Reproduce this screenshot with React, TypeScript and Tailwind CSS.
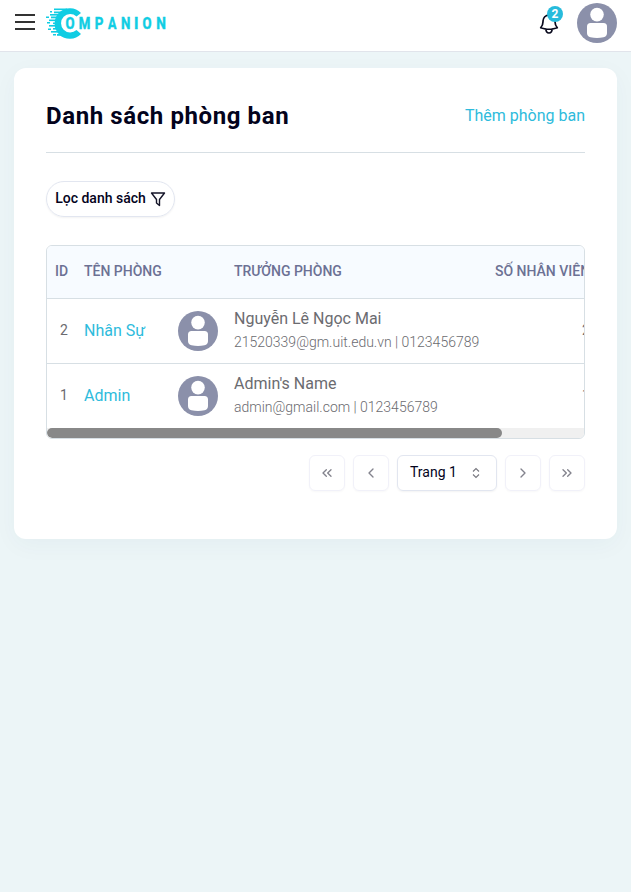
import React from "react";
import { ChevronLeft, ChevronRight, ChevronsLeft, ChevronsRight } from "lucide-react";

function Avatar() {
  return (
    <svg className="block size-10 shrink-0" viewBox="0 0 40 40">
      <circle cx="20" cy="20" r="20" fill="#8b90aa" />
      <circle cx="20" cy="11.600" r="6.800" fill="#fff" />
      <path d="M10 23.500Q10 20 13.500 20H26.500Q30 20 30 23.500V30Q30 33.600 26.500 34.300Q20 35.600 13.500 34.300Q10 33.600 10 30Z" fill="#fff" />
    </svg>
  );
}

// Each wordmark letter with its left edge and width.
const logoLetters: [string, number, number][] = [
  ["O", 20.5, 9],
  ["M", 33.8, 11.6],
  ["P", 49.8, 8.6],
  ["A", 63, 8.4],
  ["N", 76, 9.4],
  ["I", 89, 4.4],
  ["O", 97.5, 9],
  ["N", 111.2, 9.6],
];

function Logo() {
  return (
    <svg className="block h-[34px] w-[124px]" viewBox="0 0 124 34" fill="#10cde3">
      <path d="M36 7A15.300 15.300 0 1 0 36 28L31.500 24A9.200 9.200 0 1 1 31.500 10.500Z" />
      <rect x="9" y="2.500" width="13" height="1.600" />
      <rect x="5" y="5" width="2" height="1.500" />
      <rect x="9" y="5.500" width="9" height="1.800" />
      <rect x="5" y="8" width="10" height="1.600" />
      <rect x="1" y="10.500" width="3" height="1.500" />
      <rect x="6" y="10.500" width="9" height="1.800" />
      <rect x="4" y="13.500" width="9" height="1.600" />
      <rect x="8" y="16.500" width="6" height="1.600" />
      <rect x="2" y="16" width="3" height="1.500" />
      <rect x="4" y="19" width="10" height="1.600" />
      <rect x="3" y="22.500" width="3" height="1.500" />
      <rect x="8" y="22" width="7" height="1.600" />
      <rect x="6" y="25" width="10" height="1.600" />
      <rect x="8" y="28" width="3" height="1.500" />
      <rect x="12" y="28" width="8" height="1.800" />
      {logoLetters.map(([letter, x, width]) => (
        <text
          key={x}
          className="font-['Roboto',sans-serif] text-[16px] font-bold"
          x={x}
          y="22.800"
          textLength={width}
          lengthAdjust="spacingAndGlyphs"
          stroke="#10cde3"
          strokeWidth=".5"
        >
          {letter}
        </text>
      ))}
    </svg>
  );
}

function Bell() {
  return (
    <svg className="block size-6" viewBox="0 0 24 24" fill="none" stroke="#08081c" strokeWidth="1.700" strokeLinecap="round" strokeLinejoin="round">
      <path d="M14.857 17.082a23.848 23.848 0 0 0 5.454-1.310A8.967 8.967 0 0 1 18 9.750V9A6 6 0 0 0 6 9v.75a8.967 8.967 0 0 1-2.312 6.022c1.733.64 3.560 1.085 5.455 1.310m5.714 0a24.255 24.255 0 0 1-5.714 0m5.714 0a3 3 0 1 1-5.714 0" />
    </svg>
  );
}

const departments = [
  { id: 2, name: "Nhân Sự", head: "Nguyễn Lê Ngọc Mai", contact: "21520339@gm.uit.edu.vn | 0123456789", count: 2 },
  { id: 1, name: "Admin", head: "Admin's Name", contact: "admin@gmail.com | 0123456789", count: 1 },
];

function PageButton({ children }: { children: React.ReactNode }) {
  return (
    <button className="flex size-9 items-center justify-center rounded-md border border-[#f1f1f9] text-[#83838d] shadow-[0_1px_2px_rgba(0,0,0,0.03)]">
      {children}
    </button>
  );
}

export default function App() {
  return (
    <div className="min-h-screen overflow-hidden bg-[#ecf5f7] font-['Roboto',sans-serif]">
      <header className="flex h-[52px] items-start border-b border-[#e1e4eb] bg-white">
        <button className="mt-[14px] ml-[15px] flex w-5 flex-col gap-[5px]">
          <span className="h-[2px] w-5 bg-[#333]" />
          <span className="h-[2px] w-5 bg-[#333]" />
          <span className="h-[2px] w-5 bg-[#333]" />
        </button>
        <div className="mt-[6px] ml-[10px]"><Logo /></div>
        <div className="relative mt-3 ml-auto">
          <Bell />
          <span className="absolute -top-[6px] left-[10px] flex size-4 items-center justify-center rounded-full bg-[#27bbdc] text-xs font-bold text-white">2</span>
        </div>
        <div className="mt-[3px] mr-[14px] ml-4"><Avatar /></div>
      </header>

      <main className="mx-[14px] mt-4 h-[471px] rounded-xl bg-white px-8 pt-8 shadow-[0_6px_24px_rgba(20,80,100,0.04)]">
        <div className="flex h-[53px] items-start justify-between border-b border-[#d7dfe4]">
          <h1 className="text-2xl leading-8 font-bold tracking-[0.6px] text-[#03031c]">Danh sách phòng ban</h1>
          <a className="text-base leading-8 text-[#2ebbdc]">Thêm phòng ban</a>
        </div>
        <button className="mt-7 flex h-9 w-[129px] items-center justify-center gap-1 rounded-full border border-[#e2e6f0] text-sm font-medium text-[#03031c] shadow-[0_1px_2px_rgba(0,0,0,0.05)]">
          <span className="pb-0.5 whitespace-nowrap">Lọc danh sách</span>
          <svg className="size-4" viewBox="0 0 16 16" fill="none" stroke="#151529" strokeWidth="1.400" strokeLinejoin="round">
            <path d="M1.500 2H14.500L9.500 8.500V14.500L6.500 12V8.500Z" />
          </svg>
        </button>

        <div className="mt-7 h-[194px] overflow-hidden rounded-md border border-[#d7dfe4]">
          <table className="w-[636px] table-fixed border-collapse text-left">
            <colgroup>
              <col className="w-[29px]" />
              <col className="w-[94px]" />
              <col className="w-[56px]" />
              <col className="w-[261px]" />
              <col className="w-[196px]" />
            </colgroup>
            <thead>
              <tr className="h-[52px] border-b border-[#d7dfe4] bg-[#f7fbff] text-sm whitespace-nowrap text-[#6c7194]">
                <th className="p-0 pb-0.5 pl-2 font-medium">ID</th>
                <th className="p-0 pb-0.5 pl-2 font-medium">TÊN PHÒNG</th>
                <th className="p-0" />
                <th className="p-0 pb-0.5 pl-2 font-medium">TRƯỞNG PHÒNG</th>
                <th className="p-0 pb-0.5 pl-2 font-medium">SỐ NHÂN VIÊN</th>
              </tr>
            </thead>
            <tbody>
              {departments.map((d) => (
                <tr key={d.id} className="h-[65px] border-b border-[#d7dfe4] whitespace-nowrap text-[#6b6b70] last:border-b-0">
                  <td className="p-0 pb-0.5 pl-[13px] text-sm">{d.id}</td>
                  <td className="p-0 pl-2 text-base text-[#2ebbdc]">{d.name}</td>
                  <td className="p-0 pl-2"><Avatar /></td>
                  <td className="p-0 pb-0.5 pl-2">
                    <div className="text-base leading-6">{d.head}</div>
                    <div className="text-sm leading-[22px] font-light">{d.contact}</div>
                  </td>
                  <td className="p-0 pb-0.5 pl-[95px] text-sm">{d.count}</td>
                </tr>
              ))}
            </tbody>
          </table>
          <div className="h-[10px] bg-[#f0f0f0]">
            <div className="h-[10px] w-[455px] rounded-full bg-[#888]" />
          </div>
        </div>

        <div className="mt-4 flex justify-end gap-2">
          <PageButton><ChevronsLeft size={16} /></PageButton>
          <PageButton><ChevronLeft size={16} /></PageButton>
          <button className="flex h-9 w-[100px] items-center justify-between rounded-md border border-[#e2e6f0] px-3 text-sm text-[#03031c] shadow-[0_1px_2px_rgba(0,0,0,0.05)]">
            <span className="pb-0.5">Trang 1</span>
            <svg className="size-4" viewBox="0 0 16 16" fill="none" stroke="#77777f" strokeWidth="1.100">
              <path d="M5 6.500L8 3.500L11 6.500M5 9.500L8 12.500L11 9.500" />
            </svg>
          </button>
          <PageButton><ChevronRight size={16} /></PageButton>
          <PageButton><ChevronsRight size={16} /></PageButton>
        </div>
      </main>
    </div>
  );
}
